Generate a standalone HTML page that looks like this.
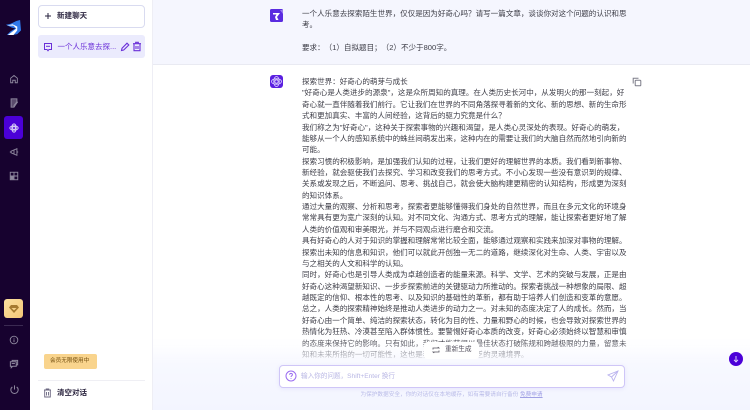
<!DOCTYPE html>
<html>
<head>
<meta charset="utf-8">
<style>
*{box-sizing:border-box}
html,body{margin:0;padding:0;width:750px;height:410px;overflow:hidden;background:#fff}
#w{position:absolute;left:0;top:0;width:750px;height:410px;overflow:hidden;filter:blur(.3px);font-family:"Liberation Sans","Noto Sans CJK SC",sans-serif;text-spacing-trim:space-all;font-feature-settings:"palt" 0}
.abs{position:absolute}
.side{left:0;top:0;width:30px;height:410px;background:#17022f}
.panel{left:30px;top:0;width:123px;height:410px;background:#fff;border-right:1px solid #eeeef5}
.userbg{left:153px;top:0;width:597px;height:65px;background:#f5f6fe;border-bottom:1px solid #e9eaf2}
.l{position:absolute;left:302px;height:11px;line-height:11px;font-size:7.55px;color:#3d3d47;white-space:nowrap}
svg{position:absolute;overflow:visible}
</style>
</head>
<body>
<div id="w">
<div class="abs side"></div>
<div class="abs panel"></div>
<div class="abs userbg"></div>

<!-- logo -->
<svg style="left:5px;top:20px" width="17" height="16" viewBox="0 0 18 17">
<path d="M1 5 L6 4 L12 1 L16 0 L17 11 L13 15 L8 16 L2 16 L6 12 L11 9 L7 8 Z" fill="#2f78e8"/>
<path d="M2 6 L9 6 L12 9 L7 13 L3 16 L9 16 L13 11 L13 7 L8 4.5 Z" fill="#fff"/>
</svg>

<!-- rail icons -->
<svg style="left:9px;top:74px" width="10" height="10" viewBox="0 0 12 12" fill="none" stroke="#8f899f" stroke-width="1.1">
<path d="M2 10.5V5L6 1.8 10 5V10.5H7.5V7.5H4.5V10.5Z"/></svg>
<svg style="left:9px;top:98px" width="10" height="10" viewBox="0 0 12 12" fill="none" stroke="#8f899f" stroke-width="1.1">
<path d="M2.5 1H9.5V4.5L6 9V11H2.5Z" fill="#8f899f" fill-opacity=".55"/><path d="M10.5 4.5 7 9.5 6.5 10.5"/></svg>
<div class="abs" style="left:4px;top:116px;width:19px;height:23px;background:#4b00d8;border-radius:3px"></div>
<svg style="left:8.5px;top:123px" width="10" height="10" viewBox="0 0 11 11" fill="none" stroke="#d6cbf6" stroke-width="1.1">
<circle cx="5.5" cy="5.5" r="1.6"/><ellipse cx="5.5" cy="5.5" rx="4.6" ry="2.4"/><ellipse cx="5.5" cy="5.5" rx="2.4" ry="4.6"/></svg>
<svg style="left:9px;top:147px" width="10" height="10" viewBox="0 0 12 12" fill="none" stroke="#8f899f" stroke-width="1.1">
<path d="M2.5 5L9.5 2V10L2.5 7Z"/><path d="M1 6H3M9.5 6H11M6 3.5V8.5"/></svg>
<svg style="left:9px;top:171px" width="10" height="10" viewBox="0 0 12 12" fill="none" stroke="#8f899f" stroke-width="1.1">
<rect x="1.5" y="1.5" width="9" height="9"/><path d="M1.5 6H6V1.5M6 6H10.5M6 6V10.5"/><rect x="2.5" y="7" width="2.5" height="2.5" fill="#8f899f"/></svg>

<div class="abs" style="left:4px;top:299px;width:19px;height:19px;border-radius:3px;background:linear-gradient(135deg,#fbe09f,#f3c677)"></div>
<svg style="left:8.5px;top:304px" width="10" height="9" viewBox="0 0 10 9">
<path d="M2 1H8L10 3.5 5 9 0 3.5Z" fill="#a57a30"/><path d="M2.5 4H7.5L5 6.5Z" fill="#f3cf85"/></svg>
<div class="abs" style="left:4px;top:325px;width:19px;height:1px;background:#3b2a52"></div>
<svg style="left:9px;top:335px" width="10" height="10" viewBox="0 0 11 11" fill="none" stroke="#8f899f" stroke-width="1">
<circle cx="5.5" cy="5.5" r="4.2"/><path d="M5.5 3.2V4M5.5 4.8V7.8"/></svg>
<svg style="left:9px;top:359px" width="10" height="10" viewBox="0 0 11 11" fill="none" stroke="#8f899f" stroke-width="1.1">
<path d="M3.5 2.5V1.5H9.5V6.5H8"/><path d="M1.5 3H8V8H4L2.5 9.5 2.5 8H1.5Z"/><path d="M3 5H6.5"/></svg>
<svg style="left:8.5px;top:384px" width="11" height="11" viewBox="0 0 12 12" fill="none" stroke="#8f899f" stroke-width="1.1">
<path d="M6 1.5V6"/><path d="M3.6 3.2A4 4 0 1 0 8.4 3.2"/></svg>

<!-- new chat -->
<div class="abs" style="left:38px;top:5px;width:107px;height:23px;background:#fff;border:1px solid #d9dbf0;border-radius:4px"></div>
<svg style="left:44px;top:12px" width="8" height="8" viewBox="0 0 8 8" fill="none" stroke="#26203c" stroke-width="1"><path d="M4 1V7M1 4H7"/></svg>
<div class="abs" style="left:57px;top:10px;height:12px;line-height:12px;font-size:7.55px;font-weight:700;color:#2c2640;white-space:nowrap">新建聊天</div>

<!-- active chat -->
<div class="abs" style="left:38px;top:35px;width:107px;height:23px;background:#ebebfd;border-radius:3px"></div>
<svg style="left:43px;top:42px" width="10" height="10" viewBox="0 0 10 10" fill="none" stroke="#6a2fd8" stroke-width="1">
<path d="M1.5 1.5H8.5V7.5H6L5 8.8 4 7.5H1.5Z"/><path d="M3 4.3H7"/></svg>
<div class="abs" style="left:57.5px;top:41px;height:12px;line-height:12px;font-size:7.5px;color:#6a2fd8;white-space:nowrap">一个人乐意去探...</div>
<svg style="left:119.5px;top:41px" width="10" height="11" viewBox="0 0 10 11" fill="none" stroke="#6a2fd8" stroke-width="1.1">
<path d="M1.5 9.5L2 7.3 7 2.2 8.8 4 3.7 9Z"/></svg>
<svg style="left:131.5px;top:41px" width="10" height="11" viewBox="0 0 10 11" fill="none" stroke="#6a2fd8" stroke-width="1.1">
<path d="M1 2.7H9M3.7 2.5V1.3H6.3V2.5M2 3V9.7H8V3M4 5V8M6 5V8"/></svg>

<!-- panel bottom -->
<div class="abs" style="left:43.5px;top:353.5px;width:53px;height:15px;background:#f9d48d;border-radius:2px"></div>
<div class="abs" style="left:50px;top:356px;height:10px;line-height:10px;font-size:5.6px;color:#704c0c;white-space:nowrap">会员无限使用中</div>
<div class="abs" style="left:38px;top:380px;width:107px;height:1px;background:#efeff4"></div>
<svg style="left:43px;top:388px" width="9" height="10" viewBox="0 0 9 10" fill="none" stroke="#6b6780" stroke-width=".9">
<path d="M1 2H8M3.2 2V1H5.8V2M1.7 2.5V9H7.3V2.5M3.5 4V7.5M5.5 4V7.5"/></svg>
<div class="abs" style="left:57px;top:387px;height:12px;line-height:12px;font-size:7.5px;font-weight:700;color:#2c2640;white-space:nowrap">清空对话</div>

<!-- avatars -->
<svg style="left:270px;top:9px" width="13" height="13" viewBox="0 0 13 13">
<rect width="13" height="13" rx="1.5" fill="#5a2be0"/><path d="M3 4H10L7 8 8.5 11H6L5 8 6.5 5.5H3Z" fill="#fff"/><path d="M10 1H13V5Z" fill="#9a7bf0"/></svg>
<svg style="left:270px;top:75px" width="13" height="13" viewBox="0 0 13 13" fill="none">
<rect width="13" height="13" rx="3" fill="#5a1fe0"/><circle cx="6.5" cy="6.5" r="1.8" stroke="#e6dcff"/><ellipse cx="6.5" cy="6.5" rx="5" ry="2.8" stroke="#d9cbff" stroke-width=".8"/><ellipse cx="6.5" cy="6.5" rx="2.8" ry="5" stroke="#d9cbff" stroke-width=".8"/></svg>

<!-- question -->
<div class="l" style="top:8px">一个人乐意去探索陌生世界，仅仅是因为好奇心吗？请写一篇文章，谈谈你对这个问题的认识和思</div>
<div class="l" style="top:19.4px">考。</div>
<div class="l" style="top:42.2px">要求：（1）自拟题目；（2）不少于800字。</div>

<!-- answer -->
<div class="l" style="top:76px">探索世界：好奇心的萌芽与成长</div>
<div class="l" style="top:87.4px">"好奇心是人类进步的源泉"，这是众所周知的真理。在人类历史长河中，从发明火的那一刻起，好</div>
<div class="l" style="top:98.7px">奇心就一直伴随着我们前行。它让我们在世界的不同角落探寻着新的文化、新的思想、新的生命形</div>
<div class="l" style="top:110.1px">式和更加真实、丰富的人间经验，这背后的驱力究竟是什么？</div>
<div class="l" style="top:121.5px">我们称之为"好奇心"，这种关于探索事物的兴趣和渴望，是人类心灵深处的表现。好奇心的萌发，</div>
<div class="l" style="top:132.9px">能够从一个人的感知系统中的蛛丝间萌发出来，这种内在的需要让我们的大脑自然而然地引向新的</div>
<div class="l" style="top:144.2px">可能。</div>
<div class="l" style="top:155.6px">探索习惯的积极影响，是加强我们认知的过程，让我们更好的理解世界的本质。我们看到新事物、</div>
<div class="l" style="top:167px">新经验，就会驱使我们去探究、学习和改变我们的思考方式。不小心发现一些没有意识到的规律、</div>
<div class="l" style="top:178.3px">关系或发现之后，不断追问、思考、挑战自己，就会使大脑构建更精密的认知结构，形成更为深刻</div>
<div class="l" style="top:189.7px">的知识体系。</div>
<div class="l" style="top:201.1px">通过大量的观察、分析和思考，探索者更能够懂得我们身处的自然世界，而且在多元文化的环境身</div>
<div class="l" style="top:212.4px">常常具有更为宽广深刻的认知。对不同文化、沟通方式、思考方式的理解，能让探索者更好地了解</div>
<div class="l" style="top:223.8px">人类的价值观和审美眼光，并与不同观点进行磨合和交流。</div>
<div class="l" style="top:235.2px">具有好奇心的人对于知识的掌握和理解常常比较全面，能够通过观察和实践来加深对事物的理解。</div>
<div class="l" style="top:246.6px">探索出未知的信息和知识，他们可以就此开创独一无二的道路，继续深化对生命、人类、宇宙以及</div>
<div class="l" style="top:257.9px">与之相关的人文和科学的认知。</div>
<div class="l" style="top:269.3px">同时，好奇心也是引导人类成为卓越创造者的能量来源。科学、文学、艺术的突破与发展，正是由</div>
<div class="l" style="top:280.7px">好奇心这种渴望新知识、一步步探索前进的关键驱动力所推动的。探索者挑战一种想象的局限、超</div>
<div class="l" style="top:292px">越既定的信仰、根本性的思考、以及知识的基础性的革新，都有助于培养人们创造和变革的意愿。</div>
<div class="l" style="top:303.4px">总之，人类的探索精神始终是推动人类进步的动力之一。对未知的态度决定了人的成长。然而，当</div>
<div class="l" style="top:314.8px">好奇心由一个简单、纯洁的探索状态，转化为目的性、力量和野心的时候，也会导致对探索世界的</div>
<div class="l" style="top:326.1px">热情化为狂热、冷漠甚至陷入群体惯性。要警惕好奇心本质的改变，好奇心必须始终以智慧和审慎</div>
<div class="l" style="top:337.5px">的态度来保持它的影响。只有如此，我们才能获得以最佳状态打破陈规和跨越极限的力量，留意未</div>
<div class="l" style="top:348.9px">知和未来所指的一切可能性，这也是我们不可或缺不乏的灵魂境界。</div>

<svg style="left:632px;top:77px" width="10" height="10" viewBox="0 0 10 10" fill="none" stroke="#7c7c88" stroke-width="1">
<rect x="3.2" y="3.2" width="5.6" height="5.6" rx=".8"/><path d="M6.5 1.2H1.2V6.5"/></svg>

<!-- bottom fade -->
<div class="abs" style="left:153px;top:335px;width:597px;height:75px;background:linear-gradient(to bottom,rgba(248,249,255,0) 0%,rgba(248,249,255,.15) 10%,rgba(248,249,255,.55) 24%,rgba(247,248,255,1) 38%,#f3f5ff 100%)"></div>

<!-- regenerate -->
<div class="abs" style="left:424px;top:342px;width:55px;height:17px;background:#fff;border-radius:3px"></div>
<svg style="left:432px;top:346px" width="8" height="8" viewBox="0 0 8 8" fill="none" stroke="#55525f" stroke-width=".8">
<path d="M1 3.5V2H7L5.8 1M7 4.5V6H1L2.2 7"/></svg>
<div class="abs" style="left:445px;top:344px;height:12px;line-height:12px;font-size:6.65px;color:#55525f;white-space:nowrap">重新生成</div>

<!-- input -->
<div class="abs" style="left:279px;top:365px;width:346px;height:23px;background:#fff;border:1px solid #cfc6f7;border-radius:4px;box-shadow:0 1px 4px rgba(120,110,230,.12)"></div>
<svg style="left:285px;top:370px" width="12" height="12" viewBox="0 0 12 12" fill="none" stroke="#9a6cf0" stroke-width="1">
<circle cx="6" cy="6" r="5"/><path d="M4.6 4.8C4.6 3.9 5.2 3.4 6 3.4S7.4 3.9 7.4 4.7C7.4 5.7 6 5.8 6 7"/><path d="M6 8V8.8"/></svg>
<div class="abs" style="left:301px;top:371px;height:11px;line-height:11px;font-size:6.6px;color:#b8b6e4;white-space:nowrap">输入你的问题，Shift+Enter 换行</div>
<svg style="left:607px;top:370px" width="12" height="12" viewBox="0 0 12 12" fill="none" stroke="#b9b2ee" stroke-width=".9">
<path d="M11 1L1 5 4.5 7 6.5 11Z"/><path d="M11 1L4.5 7"/></svg>
<div class="abs" style="left:360.5px;top:391px;height:9px;line-height:9px;font-size:5.65px;color:#b9bbe8;white-space:nowrap">为保护数据安全，你的对话仅在本地缓存，如有需要请自行备份 <span style="text-decoration:underline;color:#a0a0e4">免费申请</span></div>

<!-- scroll button -->
<div class="abs" style="left:729px;top:352px;width:14px;height:14px;background:#4b00d8;border-radius:50%"></div>
<svg style="left:732px;top:355px" width="8" height="8" viewBox="0 0 8 8" fill="none" stroke="#e4dcfb" stroke-width=".9"><path d="M4 1V7M2 4.8L4 7 6 4.8"/></svg>
</div>
</body>
</html>
